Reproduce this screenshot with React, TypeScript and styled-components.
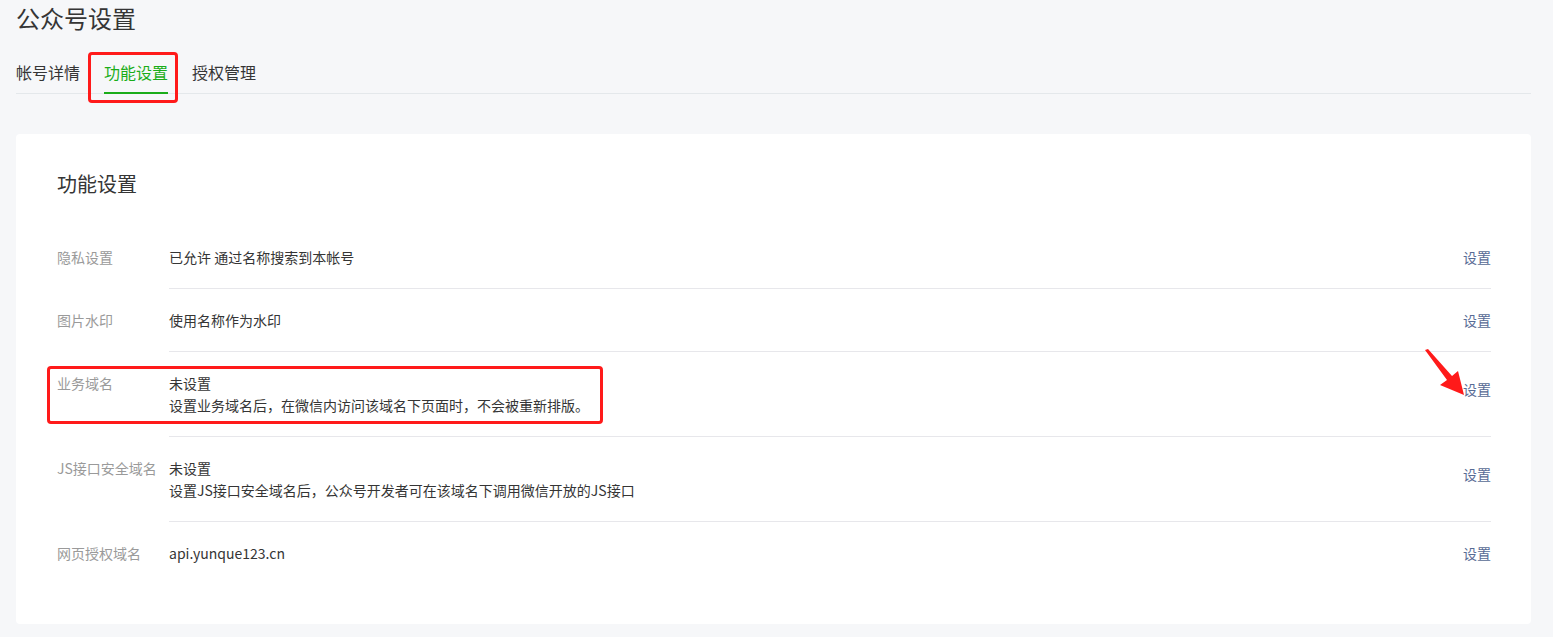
import React from "react";
import styled, { createGlobalStyle } from "styled-components";

const Global = createGlobalStyle`
  html, body { margin: 0; padding: 0; background: #f6f7f9; }
  body { font-family: "Noto Sans CJK SC", "Noto Sans", sans-serif; color: #353535; }
`;

const Page = styled.div`
  padding: 0 22px 14px 16px;
`;

const PageTitle = styled.h1`
  margin: 0;
  font-size: 24px;
  line-height: 36px;
  font-weight: 400;
  color: #353535;
`;

const TabBar = styled.div`
  margin-top: 24px;
  display: flex;
  gap: 24px;
  border-bottom: 1px solid #e4e8eb;
`;

const Tab = styled.div<{ $active?: boolean }>`
  position: relative;
  font-size: 16px;
  line-height: 24px;
  padding-bottom: 8px;
  margin-bottom: -1px;
  border-bottom: 2px solid ${(p) => (p.$active ? "#1aad19" : "transparent")};
  color: ${(p) => (p.$active ? "#1aad19" : "#353535")};
`;

const Mark = styled.div`
  position: absolute;
  border: 3px solid #ff1a1a;
  border-radius: 4px;
  pointer-events: none;
`;

const TabMark = styled(Mark)`
  top: -8px;
  left: -16px;
  right: -10px;
  bottom: -11px;
`;

const Card = styled.div`
  margin-top: 40px;
  background: #fff;
  border-radius: 4px;
  padding: 36px 40px 39px 41px;
`;

const CardTitle = styled.h2`
  margin: 0 0 28px;
  font-size: 20px;
  line-height: 28px;
  font-weight: 400;
  color: #353535;
`;

const Row = styled.div`
  position: relative;
  display: flex;
  font-size: 14px;
  line-height: 22px;
`;

const Label = styled.div`
  width: 112px;
  flex-shrink: 0;
  padding-top: 20px;
  color: #9a9a9a;
`;

const Body = styled.div<{ $last?: boolean }>`
  flex: 1;
  display: flex;
  align-items: center;
  padding: 20px 0;
  border-bottom: 1px solid ${(p) => (p.$last ? "transparent" : "#e7e7eb")};
`;

const Value = styled.div`
  flex: 1;
  color: #353535;
  display: flex;
  flex-direction: column;
`;

const Action = styled.a<{ $raised?: boolean }>`
  position: relative;
  color: #576b95;
  text-decoration: none;
  margin-bottom: ${(p) => (p.$raised ? "10px" : "0")};
`;

const RowMark = styled(Mark)`
  left: -10px;
  top: 14px;
  width: 550px;
  height: 52px;
`;

const Arrow = styled.svg`
  position: absolute;
  left: -38px;
  top: -29px;
  width: 40px;
  height: 46px;
  overflow: visible;
`;

type Item = {
  label: string;
  lines: string[];
  marked?: boolean;
};

const items: Item[] = [
  { label: "隐私设置", lines: ["已允许 通过名称搜索到本帐号"] },
  { label: "图片水印", lines: ["使用名称作为水印"] },
  {
    label: "业务域名",
    lines: ["未设置", "设置业务域名后，在微信内访问该域名下页面时，不会被重新排版。"],
    marked: true,
  },
  {
    label: "JS接口安全域名",
    lines: ["未设置", "设置JS接口安全域名后，公众号开发者可在该域名下调用微信开放的JS接口"],
  },
  { label: "网页授权域名", lines: ["api.yunque123.cn"] },
];

export default function App() {
  return (
    <>
      <Global />
      <Page>
        <PageTitle>公众号设置</PageTitle>
        <TabBar>
          <Tab>帐号详情</Tab>
          <Tab $active>
            功能设置
            <TabMark />
          </Tab>
          <Tab>授权管理</Tab>
        </TabBar>
        <Card>
          <CardTitle>功能设置</CardTitle>
          {items.map((it, i) => (
            <Row key={it.label}>
              <Label>{it.label}</Label>
              <Body $last={i === items.length - 1}>
                <Value>
                  {it.lines.map((l) => (
                    <span key={l}>{l}</span>
                  ))}
                </Value>
                <Action href="#" $raised={it.lines.length > 1}>
                  设置
                  {it.marked && (
                    <Arrow viewBox="0 0 40 46">
                      <polygon
                        points="0,1 3,0 27,27 33,22 39,46 15,36 22,31"
                        fill="#ff1a1a"
                      />
                    </Arrow>
                  )}
                </Action>
              </Body>
              {it.marked && <RowMark />}
            </Row>
          ))}
        </Card>
      </Page>
    </>
  );
}
